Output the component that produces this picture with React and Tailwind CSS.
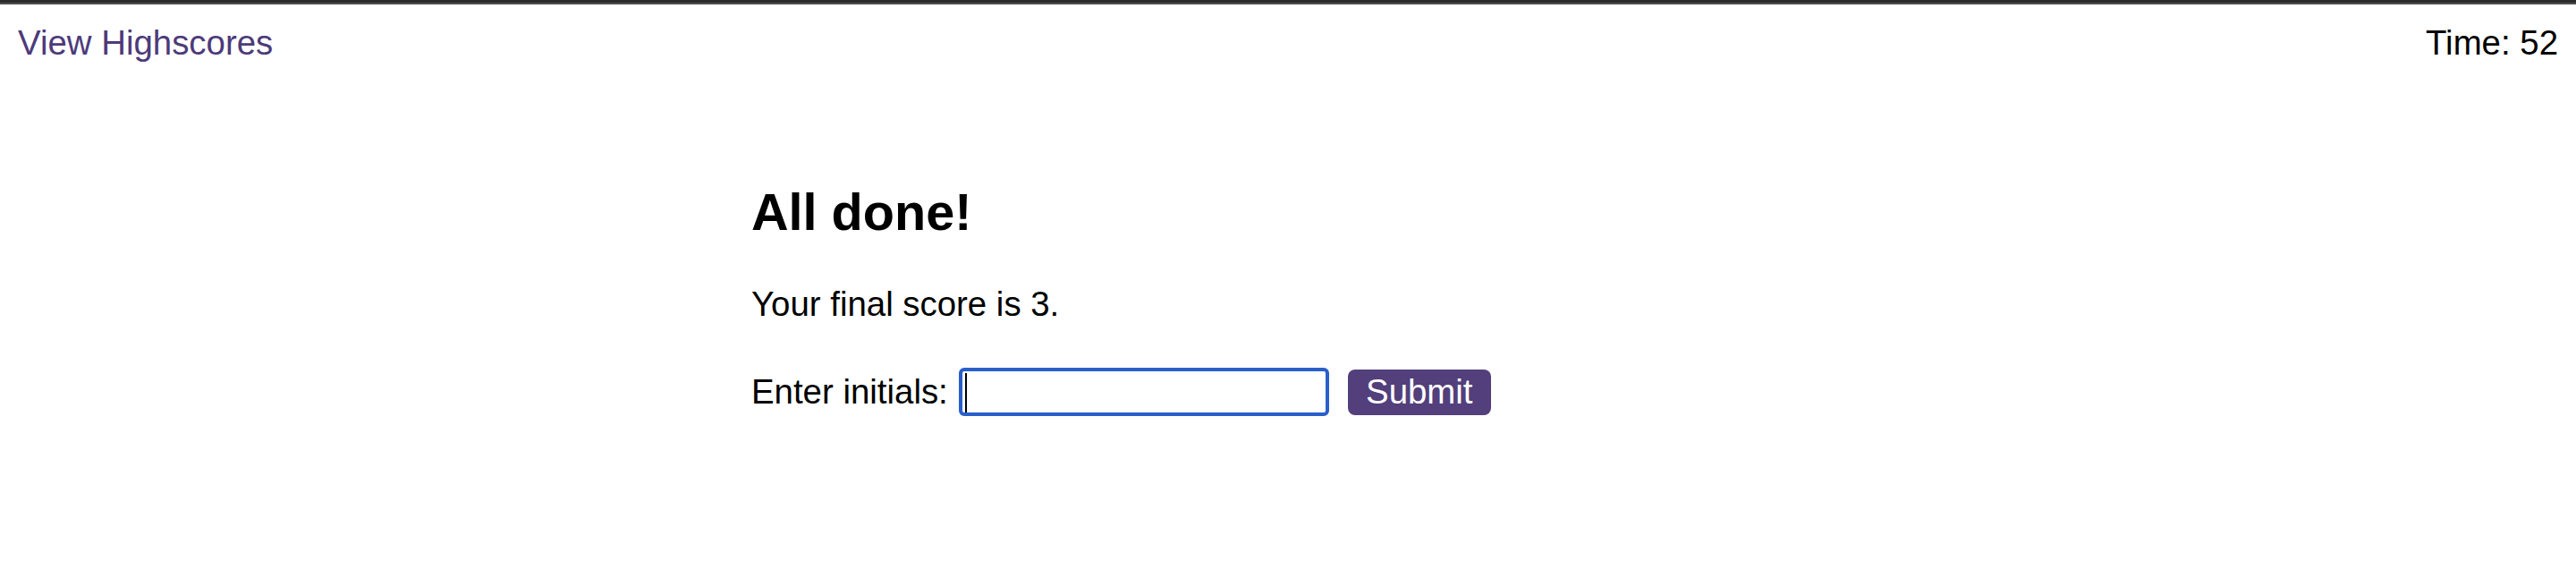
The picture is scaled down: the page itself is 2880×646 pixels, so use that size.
export default function App() {
  return (
    <div className="min-h-[646px] bg-white font-['Liberation_Sans',Arial,sans-serif] text-black">
      {/* browser frame edge */}
      <div className="h-[3px] bg-[#2b2b2b]" />
      <div className="h-[2px] bg-[#4f4f4f]" />

      <header className="flex items-center justify-between px-[20px] pt-[21px] text-[38.4px] leading-[44px]">
        <a href="#" className="text-[#4d3a7a]">
          View Highscores
        </a>
        <span>Time: 52</span>
      </header>

      <main className="mx-auto w-[1200px]">
        <h2 className="mt-[134px] text-[57.6px] font-bold leading-[66px]">All done!</h2>
        <p className="mt-[48px] text-[38.4px] leading-[44px]">Your final score is 3.</p>

        <form className="mt-[49px] flex items-center text-[38.4px] leading-[44px]" onSubmit={(e) => e.preventDefault()}>
          <label htmlFor="initials">Enter initials:</label>
          <div className="relative ml-[12px]">
            <input
              id="initials"
              type="text"
              className="block h-[54px] w-[414px] rounded-[6px] border-[4px] border-[#2a5fc9] bg-white outline-none"
            />
            {/* caret */}
            <span className="absolute left-[7px] top-[6px] h-[44px] w-[2px] bg-black" />
          </div>
          <button
            type="submit"
            className="ml-[21px] h-[51px] w-[160px] rounded-[8px] bg-[#523f7b] text-[38.4px] leading-[44px] text-white"
          >
            Submit
          </button>
        </form>
      </main>
    </div>
  );
}
